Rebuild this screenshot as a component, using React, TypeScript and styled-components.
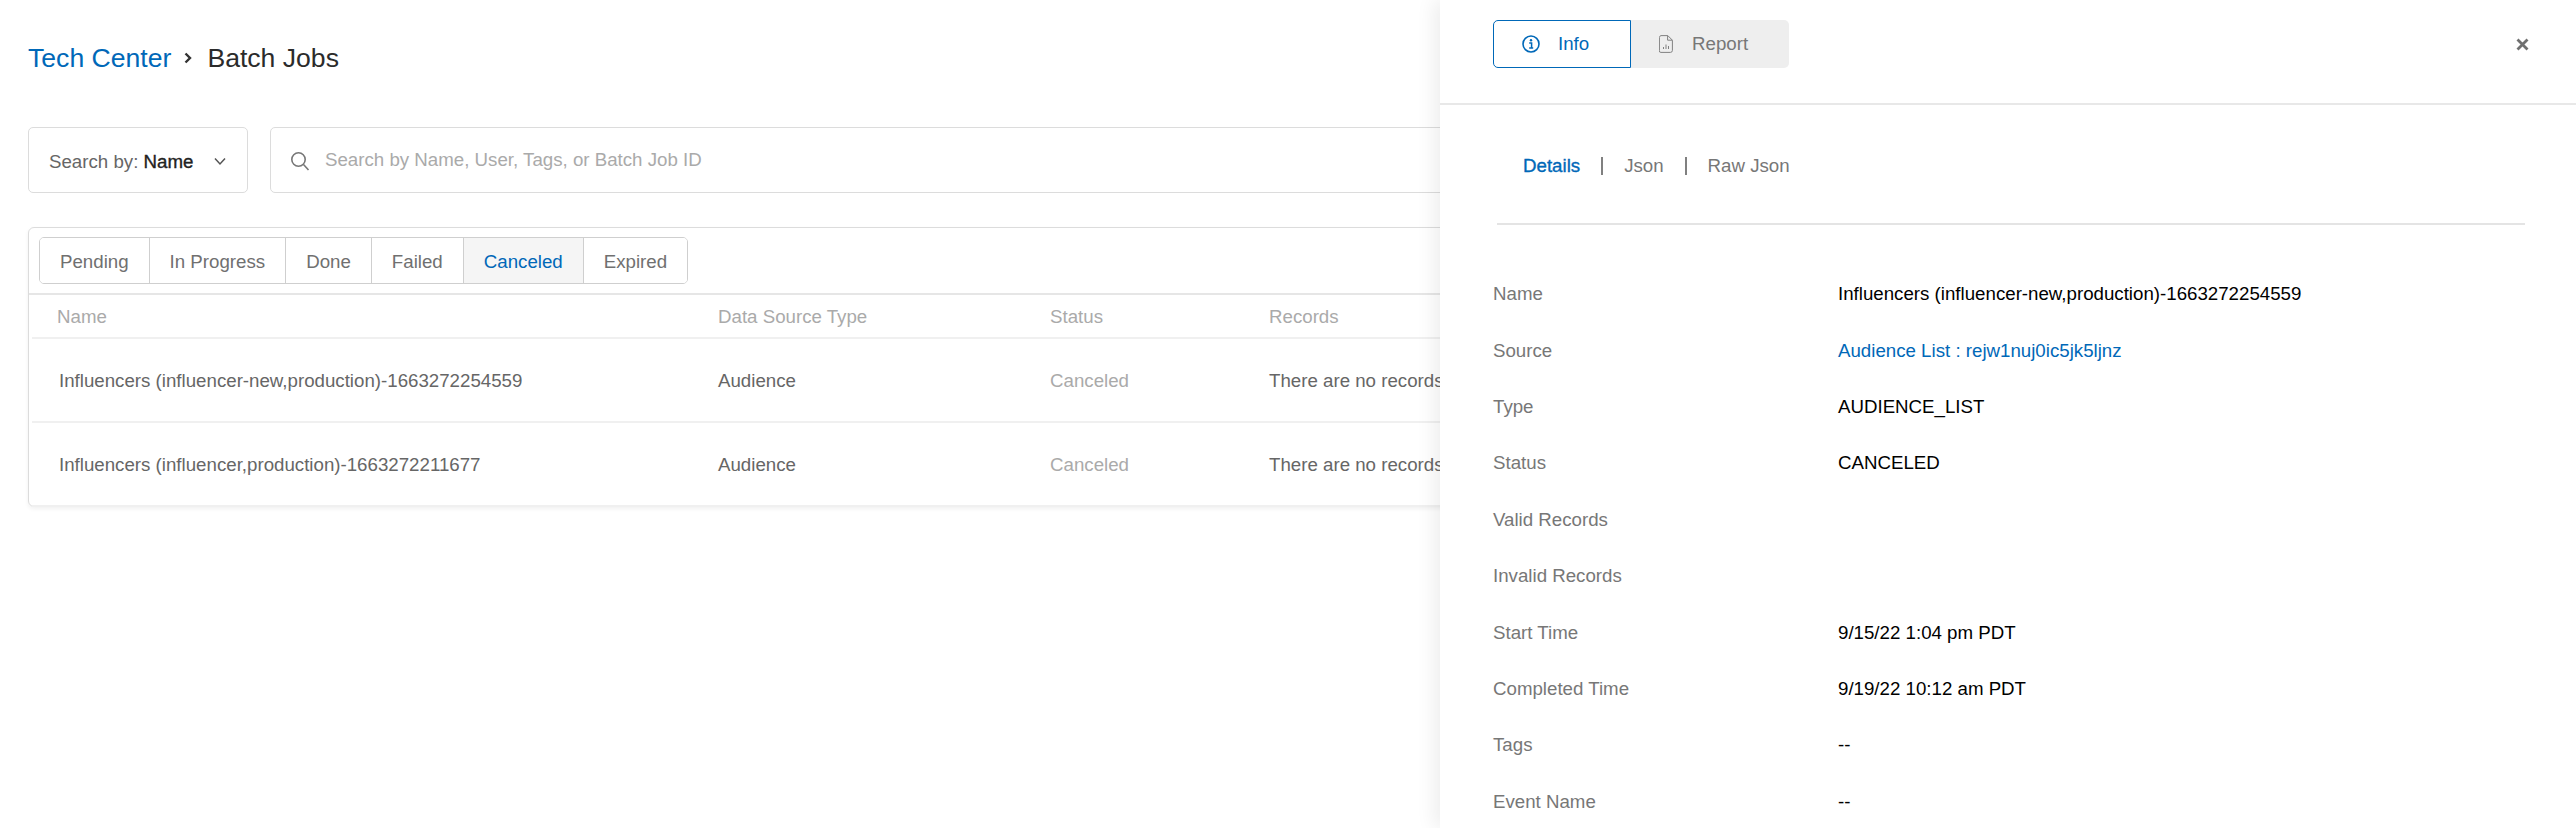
import styled, { createGlobalStyle } from "styled-components";

const GlobalStyle = createGlobalStyle`
  html, body {
    margin: 0;
    padding: 0;
    background: #fff;
    font-family: "Liberation Sans", Arial, sans-serif;
  }
  * { box-sizing: border-box; }
`;

const tabs = ["Pending", "In Progress", "Done", "Failed", "Canceled", "Expired"];

const jobs = [
  "Influencers (influencer-new,production)-1663272254559",
  "Influencers (influencer,production)-1663272211677",
];

const details: { label: string; value?: string; link?: boolean }[] = [
  { label: "Name", value: "Influencers (influencer-new,production)-1663272254559" },
  { label: "Source", value: "Audience List : rejw1nuj0ic5jk5ljnz", link: true },
  { label: "Type", value: "AUDIENCE_LIST" },
  { label: "Status", value: "CANCELED" },
  { label: "Valid Records" },
  { label: "Invalid Records" },
  { label: "Start Time", value: "9/15/22 1:04 pm PDT" },
  { label: "Completed Time", value: "9/19/22 10:12 am PDT" },
  { label: "Tags", value: "--" },
  { label: "Event Name", value: "--" },
];

const App = () => {
  return (
    <>
      <GlobalStyle />
      <Page>
        <Main>
          <Breadcrumb>
            <Crumb>Tech Center</Crumb>
            <svg width="10" height="14" viewBox="0 0 10 14" fill="none">
              <path d="M2.5 2.5 7 7l-4.500 4.500" stroke="#333" strokeWidth="2.400" />
            </svg>
            <Current>Batch Jobs</Current>
          </Breadcrumb>
          <SearchRow>
            <SearchSelect>
              <span>
                Search by: <b>Name</b>
              </span>
              <svg width="14" height="9" viewBox="0 0 14 9" fill="none">
                <path d="M2 1.500 7 7l5-5.500" stroke="#555" strokeWidth="1.500" />
              </svg>
            </SearchSelect>
            <SearchBox>
              <svg width="20" height="20" viewBox="0 0 20 20" fill="none">
                <circle cx="8.500" cy="8.500" r="6.700" stroke="#777" strokeWidth="1.600" />
                <path d="m13.500 13.500 5 5.500" stroke="#777" strokeWidth="1.600" />
              </svg>
              <span>Search by Name, User, Tags, or Batch Job ID</span>
            </SearchBox>
          </SearchRow>
          <Card>
            <TabBar>
              <TabGroup>
                {tabs.map((t) => (
                  <Tab key={t} $active={t === "Canceled"}>
                    {t}
                  </Tab>
                ))}
              </TabGroup>
            </TabBar>
            <HeadRow>
              <span>Name</span>
              <span>Data Source Type</span>
              <span>Status</span>
              <span>Records</span>
            </HeadRow>
            {jobs.map((j) => (
              <JobRow key={j}>
                <JobName>{j}</JobName>
                <span>Audience</span>
                <JobStatus>Canceled</JobStatus>
                <span>There are no records</span>
              </JobRow>
            ))}
            <CardFoot />
          </Card>
        </Main>

        <Panel>
          <PanelHeader>
            <Toggle>
              <InfoButton>
                <svg width="18" height="18" viewBox="0 0 18 18" fill="none">
                  <circle cx="9" cy="9" r="8" stroke="#0068b8" strokeWidth="1.600" />
                  <circle cx="9" cy="5.200" r="1.200" fill="#0068b8" />
                  <path d="M7.200 8h2.400v4.600M7.200 13h4" stroke="#0068b8" strokeWidth="1.500" />
                </svg>
                Info
              </InfoButton>
              <ReportButton>
                <svg width="14" height="18" viewBox="0 0 14 18" fill="none">
                  <path
                    d="M2 .6h6.800l4.600 4.600V15.400a2 2 0 0 1-2 2H2a1.600 1.600 0 0 1-1.600-2V2.600A2 2 0 0 1 2 .6Z"
                    stroke="#808080"
                    strokeWidth="1"
                  />
                  <path d="M8.600.8v4.400h4.600" stroke="#808080" strokeWidth="1" />
                  <path d="M4.500 14v-2M7 14V9.500M9.500 14v-3" stroke="#808080" strokeWidth="1" />
                </svg>
                Report
              </ReportButton>
            </Toggle>
            <CloseButton>
              <svg width="13" height="13" viewBox="0 0 13 13" fill="none">
                <path d="M1.500 1.500l10 10M11.500 1.500l-10 10" stroke="#707070" strokeWidth="2.800" />
              </svg>
            </CloseButton>
          </PanelHeader>
          <PanelBody>
            <SubTabs>
              <SubTab $active>Details</SubTab>
              <Pipe />
              <SubTab>Json</SubTab>
              <Pipe />
              <SubTab>Raw Json</SubTab>
            </SubTabs>
            <DetailList>
              {details.map((d) => (
                <DetailRow key={d.label}>
                  <DetailLabel>{d.label}</DetailLabel>
                  <DetailValue $link={d.link}>{d.value}</DetailValue>
                </DetailRow>
              ))}
            </DetailList>
          </PanelBody>
        </Panel>
      </Page>
    </>
  );
};

export default App;

const Page = styled.div`
  position: relative;
  width: 2576px;
  height: 828px;
  overflow: hidden;
  background: #fff;
`;

const Main = styled.div`
  padding: 0 28px;
`;

const Breadcrumb = styled.div`
  display: flex;
  align-items: center;
  height: 114px;
  padding-top: 2px;
  font-size: 26.600px;
  svg {
    margin: 0 14px 0 12px;
  }
`;

const Crumb = styled.span`
  color: #0068b8;
`;

const Current = styled.span`
  color: #2b2b2b;
`;

const SearchRow = styled.div`
  display: flex;
  gap: 22px;
  margin-top: 13px;
`;

const SearchSelect = styled.div`
  width: 220px;
  height: 66px;
  display: flex;
  align-items: center;
  justify-content: space-between;
  padding: 3px 20px 0 20px;
  border: 1px solid #dcdcdc;
  border-radius: 5px;
  font-size: 18.700px;
  color: #666;
  b {
    font-weight: 400;
    color: #222;
    -webkit-text-stroke: 0.35px #222;
  }
`;

const SearchBox = styled.div`
  flex: 1;
  height: 66px;
  display: flex;
  align-items: center;
  gap: 15px;
  padding: 0 0 0 19px;
  border: 1px solid #dcdcdc;
  border-radius: 5px;
  font-size: 18.700px;
  color: #aaa;
  svg {
    margin-top: 2px;
  }
`;

const Card = styled.div`
  margin-top: 34px;
  height: 280px;
  border: 1px solid #dcdcdc;
  border-radius: 6px;
  box-shadow: 0 2px 4px rgba(0, 0, 0, 0.06);
  display: flex;
  flex-direction: column;
`;

const TabBar = styled.div`
  height: 67px;
  flex: none;
  padding: 9px 0 0 10px;
  border-bottom: 2px solid #e6e6e6;
`;

const TabGroup = styled.div`
  display: inline-flex;
  height: 47px;
  border: 1px solid #cfcfcf;
  border-radius: 5px;
  overflow: hidden;
`;

const Tab = styled.div<{ $active?: boolean }>`
  display: flex;
  align-items: center;
  padding: 3px 20px 0;
  font-size: 18.700px;
  color: ${(p) => (p.$active ? "#0068b8" : "#707070")};
  background: ${(p) => (p.$active ? "#f5f5f5" : "#fff")};
  & + & {
    border-left: 1px solid #cfcfcf;
  }
`;

const HeadRow = styled.div`
  height: 44px;
  flex: none;
  margin-left: 3px;
  padding: 1px 0 0 25px;
  display: grid;
  grid-template-columns: 661px 332px 219px 1fr;
  align-items: center;
  border-bottom: 2px solid #f0f0f0;
  font-size: 18.700px;
  color: #aaa;
`;

const JobRow = styled.div`
  height: 84px;
  flex: none;
  margin-left: 3px;
  padding: 1px 0 0 25px;
  display: grid;
  grid-template-columns: 661px 332px 219px 1fr;
  align-items: center;
  border-bottom: 2px solid #f0f0f0;
  font-size: 18.700px;
  color: #666;
  &:last-of-type {
    border-bottom: none;
  }
`;

const JobName = styled.span`
  padding-left: 2px;
`;

const JobStatus = styled.span`
  color: #aaa;
`;

const CardFoot = styled.div`
  flex: 1;
  background: #f5f5f5;
  border-radius: 0 0 6px 6px;
`;

const Panel = styled.aside`
  position: absolute;
  top: 0;
  right: 0;
  bottom: 0;
  width: 1136px;
  background: #fff;
  box-shadow: -6px 0 18px rgba(0, 0, 0, 0.07);
`;

const PanelHeader = styled.div`
  height: 105px;
  display: flex;
  align-items: flex-start;
  justify-content: space-between;
  padding: 20px 47px 0 53px;
  border-bottom: 2px solid #e8e8e8;
`;

const Toggle = styled.div`
  display: flex;
  height: 48px;
`;

const InfoButton = styled.div`
  width: 138px;
  display: flex;
  align-items: center;
  gap: 18px;
  padding-left: 28px;
  border: 1.500px solid #0068b8;
  border-radius: 5px 0 0 5px;
  font-size: 18.700px;
  color: #0068b8;
`;

const ReportButton = styled.div`
  width: 158px;
  display: flex;
  align-items: center;
  gap: 19px;
  padding-left: 28px;
  background: #eeeeee;
  border-radius: 0 5px 5px 0;
  font-size: 18.700px;
  color: #777;
`;

const CloseButton = styled.div`
  display: flex;
  margin-top: 18px;
`;

const PanelBody = styled.div`
  padding: 0 51px 0 53px;
`;

const SubTabs = styled.div`
  height: 120px;
  margin-left: 4px;
  padding: 3px 0 0 26px;
  display: flex;
  align-items: center;
  gap: 21px;
  border-bottom: 2px solid #e4e4e4;
  font-size: 18.700px;
`;

const SubTab = styled.span<{ $active?: boolean }>`
  color: ${(p) => (p.$active ? "#0068b8" : "#777")};
  -webkit-text-stroke: ${(p) => (p.$active ? "0.35px #0068b8" : "0")};
`;

const Pipe = styled.span`
  width: 2px;
  height: 18px;
  background: #808080;
`;

const DetailList = styled.div`
  padding-top: 41px;
`;

const DetailRow = styled.div`
  height: 56.400px;
  display: grid;
  grid-template-columns: 345px 1fr;
  align-items: center;
  font-size: 18.700px;
`;

const DetailLabel = styled.span`
  color: #777;
`;

const DetailValue = styled.span<{ $link?: boolean }>`
  color: ${(p) => (p.$link ? "#0068b8" : "#000")};
`;
